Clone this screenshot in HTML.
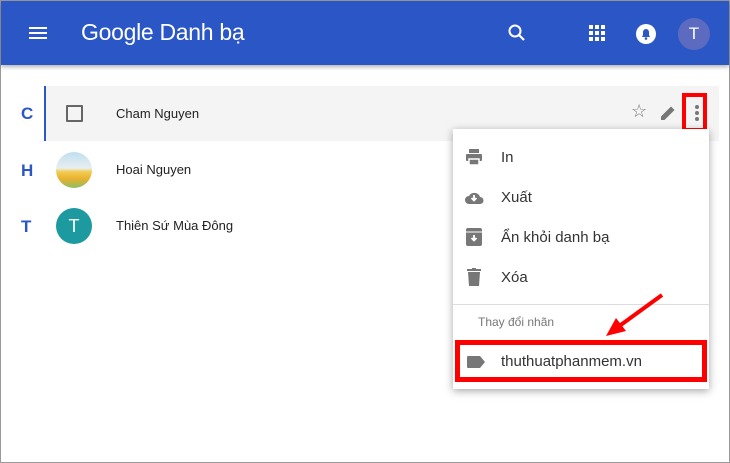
<!DOCTYPE html><html><head><meta charset="utf-8"><style>
*{margin:0;padding:0;box-sizing:border-box}
body{width:730px;height:463px;overflow:hidden;background:#fff;font-family:"Liberation Sans",sans-serif;position:relative;border:1px solid #9a9a9a}
.hdr{position:absolute;left:0;top:0;width:728px;height:64px;background:#2b57c6;box-shadow:0 2px 4px rgba(0,0,0,.3)}
.a{position:absolute}
.letter{position:absolute;left:20px;font-weight:bold;color:#2b57c6;font-size:17px}
.name{position:absolute;left:115px;font-size:13px;color:#222}
.mi{position:absolute;left:500px;font-size:15px;color:#333}
</style></head><body>
<div class="hdr"></div>
<div class="a" style="left:28px;top:26px;width:18px;height:2px;background:#fff;box-shadow:0 5px #fff,0 10px #fff"></div>
<div class="a" style="left:80px;top:18px;color:#fff;font-size:23px;letter-spacing:-0.3px">Google&nbsp;Danh bạ</div>
<svg class="a" style="left:506px;top:22px" width="20" height="20" viewBox="0 0 20 20"><circle cx="8" cy="8" r="5.5" fill="none" stroke="#fff" stroke-width="2"/><path d="M12 12l5 5" stroke="#fff" stroke-width="2.2"/></svg>
<svg class="a" style="left:588px;top:24px" width="18" height="18" viewBox="0 0 18 18" fill="#fff"><rect x="0" y="0" width="4" height="4"/><rect x="6" y="0" width="4" height="4"/><rect x="12" y="0" width="4" height="4"/><rect x="0" y="6" width="4" height="4"/><rect x="6" y="6" width="4" height="4"/><rect x="12" y="6" width="4" height="4"/><rect x="0" y="12" width="4" height="4"/><rect x="6" y="12" width="4" height="4"/><rect x="12" y="12" width="4" height="4"/></svg>
<svg class="a" style="left:634px;top:22px" width="22" height="22" viewBox="0 0 22 22"><circle cx="11" cy="11" r="10" fill="#fff"/><path d="M7 14h8l-1-2v-3a3 3 0 0 0-6 0v3z" fill="#2b57c6"/><circle cx="11" cy="15.5" r="1.3" fill="#2b57c6"/></svg>
<div class="a" style="left:677px;top:17px;width:32px;height:32px;border-radius:50%;background:#5c6bc0;color:#fff;font-size:17px;text-align:center;line-height:32px">T</div>

<div class="a" style="left:43px;top:85px;width:675px;height:55px;background:#f4f4f4;border-left:2px solid #2b57c6"></div>
<div class="letter" style="top:103px">C</div>
<div class="a" style="left:65px;top:104px;width:17px;height:17px;border:2px solid #666;border-radius:1px"></div>
<div class="name" style="top:105px">Cham Nguyen</div>
<div class="letter" style="top:160px">H</div>
<div class="a" style="left:55px;top:151px;width:36px;height:36px;border-radius:50%;background:linear-gradient(#bfe0f0 0,#e8eef0 45%,#f2cc50 55%,#e8b030 75%,#8ac060 100%)"></div>
<div class="name" style="top:161px">Hoai Nguyen</div>
<div class="letter" style="top:216px">T</div>
<div class="a" style="left:55px;top:207px;width:36px;height:36px;border-radius:50%;background:#1c9a9f;color:#fff;text-align:center;line-height:36px;font-size:18px">T</div>
<div class="name" style="top:217px">Thiên Sứ Mùa Đông</div>

<div class="a" style="left:630px;top:100px;color:#777;font-size:18px">☆</div>
<svg class="a" style="left:658px;top:103px" width="18" height="18" viewBox="0 0 18 18"><path d="M2 16v-3.5L12 2.5l3.5 3.5L5.5 16z" fill="#777"/></svg>
<div class="a" style="left:694px;top:104px;width:4px;height:4px;border-radius:50%;background:#777;box-shadow:0 6px #777,0 12px #777"></div>
<div class="a" style="left:681px;top:92px;width:25px;height:39px;border:4px solid #f00"></div>

<div class="a" style="left:452px;top:128px;width:256px;height:260px;background:#fff;box-shadow:0 2px 8px rgba(0,0,0,.35)"></div>
<svg class="a" style="left:464px;top:147px" width="18" height="18" viewBox="0 0 18 18" fill="#777"><rect x="4" y="1" width="10" height="4"/><rect x="1" y="6" width="16" height="7" rx="1"/><rect x="4" y="11" width="10" height="6" fill="#777" stroke="#fff" stroke-width="1.5"/></svg>
<div class="mi" style="top:148px">In</div>
<svg class="a" style="left:463px;top:188px" width="20" height="16" viewBox="0 0 20 16"><path d="M5 15a4 4 0 0 1 0-8 6 6 0 0 1 11 1 3.5 3.5 0 0 1 0 7z" fill="#777"/><path d="M10 6v5M7.5 9l2.5 2.5 2.5-2.5" stroke="#fff" stroke-width="1.8" fill="none"/></svg>
<div class="mi" style="top:188px">Xuất</div>
<svg class="a" style="left:465px;top:227px" width="16" height="18" viewBox="0 0 16 18"><rect x="0" y="0" width="16" height="18" rx="2" fill="#777"/><path d="M0 4h16" stroke="#fff"/><path d="M8 7v5M5.5 10l2.5 2.5 2.5-2.5" stroke="#fff" stroke-width="1.8" fill="none"/></svg>
<div class="mi" style="top:228px">Ẩn khỏi danh bạ</div>
<svg class="a" style="left:466px;top:267px" width="14" height="18" viewBox="0 0 14 18" fill="#777"><rect x="0" y="1" width="14" height="2"/><rect x="5" y="0" width="4" height="2"/><path d="M1 4h12l-1 14H2z"/></svg>
<div class="mi" style="top:268px">Xóa</div>
<div class="a" style="left:452px;top:303px;width:256px;height:1px;background:#ddd"></div>
<div class="a" style="left:477px;top:314px;font-size:12px;color:#777">Thay đổi nhãn</div>
<svg class="a" style="left:466px;top:355px" width="18" height="12" viewBox="0 0 18 12"><path d="M0 1a1 1 0 0 1 1-1h12l5 6-5 6H1a1 1 0 0 1-1-1z" fill="#777"/></svg>
<div class="mi" style="top:352px">thuthuatphanmem.vn</div>
<div class="a" style="left:454px;top:339px;width:252px;height:42px;border:5px solid #f00"></div>
<svg class="a" style="left:595px;top:290px" width="70" height="50" viewBox="0 0 70 50"><path d="M66 4L22 36" stroke="#f00" stroke-width="4"/><path d="M10 45L30 40 20 27z" fill="#f00"/></svg>
</body></html>
